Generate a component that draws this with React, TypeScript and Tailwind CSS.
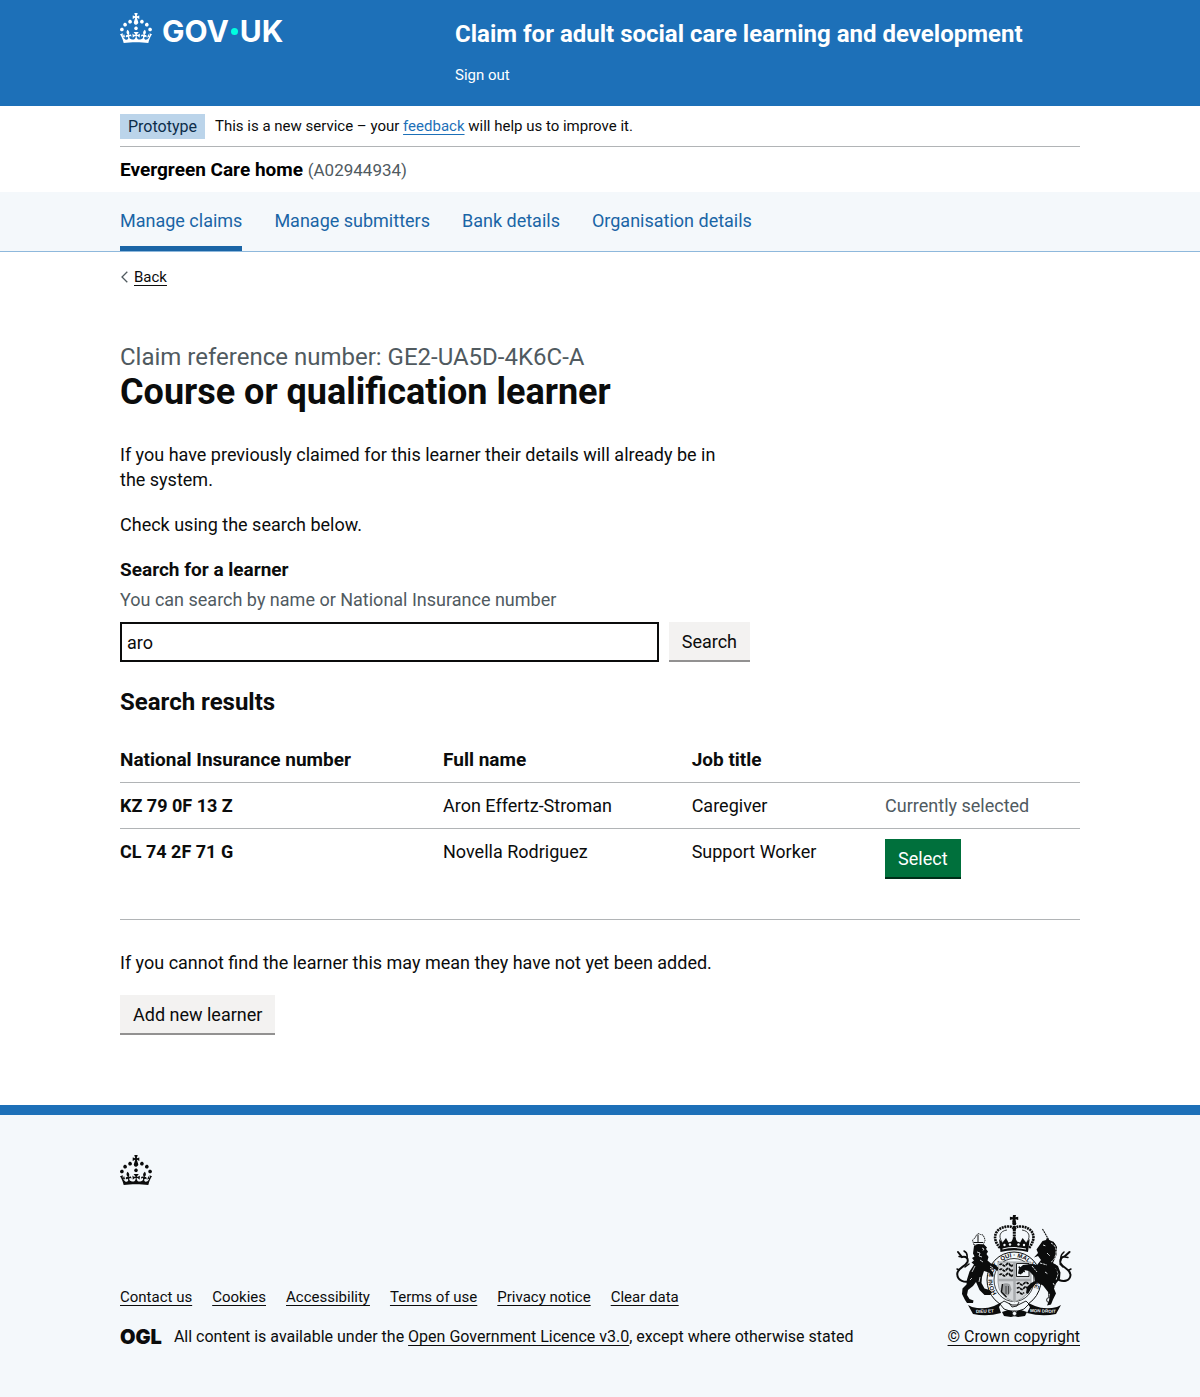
import React, { useState } from "react";

const CROWN =
  "M22.6 10.4c-1 .4-2-.1-2.4-1-.4-.9.1-2 1-2.4.9-.4 2 .1 2.4 1s-.1 2-1 2.4m-5.9 6.7c-.9.4-2-.1-2.4-1-.4-.9.1-2 1-2.4.9-.4 2 .1 2.4 1s-.1 2-1 2.4m10.8-3.7c-1 .4-2-.1-2.4-1-.4-.9.1-2 1-2.4.9-.4 2 .1 2.4 1s0 2-1 2.4m3.3 4.8c-1 .4-2-.1-2.4-1-.4-.9.1-2 1-2.4.9-.4 2 .1 2.4 1s-.1 2-1 2.4M17 4.7l2.3 1.2V2.5l-2.3.7-.2-.2.9-3h-3.4l.9 3-.2.2c-.1.1-2.3-.7-2.3-.7v3.4L15 4.7c.1.1.1.2.2.2l-1.3 4c-.1.2-.1.4-.1.6 0 1.1.8 2 1.9 2.2h.7c1-.2 1.9-1.1 1.9-2.1 0-.2 0-.4-.1-.6l-1.3-4c-.1-.2 0-.2.1-.3m-7.6 5.7c.9.4 2-.1 2.4-1 .4-.9-.1-2-1-2.4-.9-.4-2 .1-2.4 1s0 2 1 2.4m-5 3c.9.4 2-.1 2.4-1 .4-.9-.1-2-1-2.4-.9-.4-2 .1-2.4 1s.1 2 1 2.4m-3.2 4.8c.9.4 2-.1 2.4-1 .4-.9-.1-2-1-2.4-.9-.4-2 .1-2.4 1s0 2 1 2.4m14.8 11c4.4 0 8.6.3 12.3.8 1.1-4.5 2.4-7 3.7-8.8l-2.5-.9c.2 1.3.3 1.9 0 2.7-.4-.4-.8-1.1-1.1-2.3l-1.2 4c.7-.5 1.3-.8 2-.9-1.1 2.5-2.6 3.1-3.5 3-1.1-.2-1.7-1.2-1.5-2.1.3-1.2 1.5-1.5 2.1-.1 1.1-2.3-.8-3-2-2.3 1.9-1.9 2.1-3.5.6-5.6-2.1 1.6-2.1 3.2-1.2 5.5-1.2-1.4-3.2-.6-2.5 1.6.9-1.4 2.1-.5 1.9.8-.2 1.1-1.7 2.1-3.5 1.9-2.7-.2-2.9-2.1-2.9-3.6.7-.1 1.9.5 2.9 1.9l.4-4.3c-1.1 1.1-2.1 1.4-3.2 1.4.4-1.2 2.1-3 2.1-3h-5.4s1.7 1.9 2.1 3c-1.1 0-2.1-.2-3.2-1.4l.4 4.3c1-1.4 2.2-2 2.9-1.9-.1 1.5-.2 3.4-2.9 3.6-1.9.2-3.4-.8-3.5-1.9-.2-1.3 1-2.2 1.9-.8.7-2.3-1.2-3-2.5-1.6.9-2.2.9-3.9-1.2-5.5-1.5 2-1.3 3.7.6 5.6-1.2-.7-3.1 0-2 2.3.6-1.4 1.8-1.1 2.1.1.2.9-.3 1.9-1.5 2.1-.9.2-2.4-.5-3.5-3 .6 0 1.2.3 2 .9l-1.2-4c-.3 1.1-.7 1.9-1.1 2.3-.3-.8-.2-1.4 0-2.7l-2.9.9C1.3 23 2.6 25.5 3.7 30c3.7-.5 7.9-.8 12.3-.8";

const NAV = ["Manage claims", "Manage submitters", "Bank details", "Organisation details"];
const FOOTER_LINKS = ["Contact us", "Cookies", "Accessibility", "Terms of use", "Privacy notice", "Clear data"];

function Container({ children, className = "" }: { children: React.ReactNode; className?: string }) {
  return (
    <div className="px-4 lg:px-8">
      <div className={`mx-auto max-w-[960px] ${className}`}>{children}</div>
    </div>
  );
}

function Crown() {
  return (
    <svg viewBox="0 0 32 30" width="32" height="30" fill="currentColor" aria-hidden="true" className="shrink-0">
      <path d={CROWN} />
    </svg>
  );
}

function Wordmark() {
  return (
    <a href="#" aria-label="GOV.UK" className="flex items-start gap-2.5 text-white">
      <Crown />
      <span className="flex items-center pt-[3px] font-['Inter',sans-serif] text-[30px] leading-[30px] font-bold">
        GOV
        <span className="mx-0.5 size-[7px] rounded-full bg-[#00ffe0]" />
        UK
      </span>
    </a>
  );
}

function CoatOfArms() {
  return (
    <svg viewBox="0 0 116 102" width="116" height="102" fill="#0b0c0c" aria-hidden="true">
      <defs>
        <path id="garter" d="M58 87.500a21.500 22.700 0 1 1 .1 0" />
      </defs>
      {/* crown */}
      <path d="M57 0h3l-.5 2.300 2.700-.6v3.200l-2.700-.6.6 3.200h-4l.6-3.200-2.800.6V1.700l2.800.6z" />
      <circle cx="58.300" cy="8.500" r="2" />
      <g fill="none" stroke="#0b0c0c">
        <path d="M44 33C35 23 39 13 51 11.500q5-.5 7.300 2.500 2.300-3 7.300-2.500C78 13 81 23 73 33" strokeWidth="2.600" strokeDasharray="2 .7" />
        <path d="M46 27c-4-6-2-11 5-12M71 27c4-6 2-11-5-12" strokeWidth=".8" />
        <path d="M58.300 11v14" strokeWidth="3" strokeDasharray="2.200 .6" />
      </g>
      <path d="M43 24l3.500 3.500L50 23l2.500 4.500 3-1 2.800-5.500 2.800 5.500 3 1 2.500-4.500 3.500 4.500 3.600-3.500L72 37q-14-3.500-27.500 0z" />
      <g fill="#f4f8fb">
        <circle cx="48.500" cy="30" r="1.200" />
        <circle cx="54" cy="29.500" r="1.200" />
        <circle cx="62.500" cy="29.500" r="1.200" />
        <circle cx="68" cy="30" r="1.200" />
        <path d="M46.500 33.500q12-2.800 23.500 0v1q-12-2.800-23.500 0z" />
      </g>
      {/* garter */}
      <ellipse cx="58" cy="65" rx="27" ry="28" fill="#f4f8fb" stroke="#0b0c0c" strokeWidth="1" />
      <ellipse cx="58" cy="65" rx="20" ry="21.500" fill="none" stroke="#0b0c0c" strokeWidth=".8" />
      <text fontFamily="Liberation Sans, sans-serif" fontWeight="700" fontSize="6">
        <textPath href="#garter" startOffset="20">
          HONI SOIT · QUI · MAL Y PENSE
        </textPath>
      </text>
      {/* shield */}
      <path d="M42 47h33v20q0 14-16.500 20Q42 81 42 67z" fill="#d3d6d8" stroke="#8d9092" strokeWidth=".8" />
      <path d="M42 65h33M58.500 47v40" stroke="#a9acae" strokeWidth="2.500" />
      <path d="M60.500 48.500H73v13H60.500z" fill="#f4f8fb" stroke="#0b0c0c" strokeWidth=".9" />
      <path d="M63 51l1.800 1.400 2-1.200 1.400 1-.6 1.400 2-1 .6 1.400-1.600 1.200.6 2.400-1.600-.8-1.400 1.800-.8-1.400-1.600 1.400.4-2.400-1.300-.8 1-1.300-1.500-1.300z" />
      <g fill="none" stroke="#0b0c0c" strokeWidth="1.700">
        <path d="M43.500 50q2-2 3.500 0t3.500-.5 3.500.5 2.500-.5M43.500 55q2-2 3.500 0t3.500-.5 3.500.5 2.500-.5M43.500 60q2-2 3.500 0t3.500-.5 3.500.5 2.500-.5" strokeDasharray="3 .6" />
        <path d="M61 69q2-2 3.500 0t3.500-.5 4.500.5M61 73.500q2-2 3.500 0t3.500-.5 3.500.5M61 78q2-2 3.500 0t3.500-.5" strokeDasharray="3 .6" />
      </g>
      <path d="M46 69.500q4-2.500 8 0l1.500 5-3 6q-5-.5-8-6.500z" fill="#9a9d9f" />
      <path d="M46.500 69l-1 8 5 5" fill="none" stroke="#0b0c0c" strokeWidth="1.300" />
      <path d="M50 71v8M52.500 71v8" stroke="#0b0c0c" strokeWidth=".6" />
      {/* lion */}
      <path d="M18 30l-1.500-5 2.500-2 1.500-3 2-1.500 2 1 2.500.5 1.500 3 .5 2.500-2 4.500z" fill="#f4f8fb" stroke="#0b0c0c" strokeWidth=".9" strokeDasharray="1.600 .6" />
      <path d="M22 19.500v8M18 27.500h9" stroke="#0b0c0c" strokeWidth="1" />
      <path d="M18 31l4-2 6 .5 3 3-1 1.500 2 2.500-1.500 2.500 2 3-1 3.500 3.500 3 4.500 1.500 3 3-1 3-3-2-5-1 3.500 4.500.5 4-2-.5-2.500-3.500-5-1.500-2 6-.5 6 3 5.500 5 1.500 2.500 2-1.500 3h-6l-5-5-3.500-8-3 4-5 4-1 5 2.500 4 4 1.500-.5 2.500h-6l-2-3-3-6 .5-5.500 4-4 .5-5 2.500-8 4.500-7-2.500-2 2.500-2-2-2.500 2.500-1.500-1.500-3z" />
      <path d="M26 33l2 1-1 1.500M21 37l3 1-1 3 3 1M24 45l3 2M19 51l-3 6M16 63l-3 3M24 62l-1 5M34 51l3 2" fill="none" stroke="#f4f8fb" strokeWidth=".8" />
      <g fill="none" stroke="#0b0c0c" strokeLinecap="round">
        <path d="M14 66C9 68 1.500 66 1.200 59c0-6 8-7 10.300-12C12.500 43 10 41 6 42L2 37" strokeWidth="2" />
        <path d="M11 43q1-5-3-7M6 42l-3-.5M9 52l4-3M3 55l-2-1" strokeWidth="1.500" />
      </g>
      {/* unicorn */}
      <path d="M86.500 14l7 12" stroke="#0b0c0c" strokeWidth="1.100" strokeDasharray="2 .6" />
      <path d="M82 38l-1.500-3.500 6-8.500 3.500-1 1-2.500 2 2.500 5 2 3 5-.5 8-3.500 8 5 3 2.500 6.500-.5 6-4 5-2 5 2 5-3 6-2 5-4 1 2-5 1-6-3.500-4.500-3.500-4.500-6-3-6 6.500-3 5-2-1 1-6 4-4 4-2-1-5-5-5-5-1-3 4.500-3-1 1-5 4-3.500 8-1 6 1 4-5-3-4-4 1.500z" />
      <path d="M95 28q6 3 5 10t-5 9M98 27q6 4 5 12M87 30l3 1M91 38l3 3M84 48l7 2M76 51l5 6M100 53l2 6-2 6M82 71l-3 4M97 68l3 5M89 57l3 2" fill="none" stroke="#f4f8fb" strokeWidth=".9" strokeDasharray="2.500 .8" />
      <g fill="none" stroke="#0b0c0c" strokeLinecap="round">
        <path d="M103 65c5 2 11 1 11.500-5 .3-6-8-7-10-12-1-4 1.500-6 4-6.500l5-4.500" strokeWidth="2" />
        <path d="M105 45q-1-5 3-8M109 42l3 .5M107 52l-3-3M113 55l2-1" strokeWidth="1.500" />
        <path d="M99 50q5 10-3 18-4 5-3 14" strokeWidth="1.200" strokeDasharray="1.500 1" />
        <circle cx="93" cy="85" r="2.400" strokeWidth=".9" />
      </g>
      {/* motto scroll */}
      <path d="M12 90l4 2q12 3 22-1l8-4-3 5 2 6q-14 4-28 1z" />
      <path d="M105 90l-4 2q-12 3-22-1l-9-4 4 5-3 6q15 4 29 1z" />
      <g fill="#f4f8fb" fontFamily="Liberation Sans, sans-serif" fontWeight="700" fontSize="4.500">
        <text x="20" y="98" transform="rotate(-2 20 98)">DIEU ET</text>
        <text x="74" y="97" transform="rotate(2 74 97)">MON DROIT</text>
      </g>
      {/* buckle and roses */}
      <path d="M48 86l8 4 6 0 8-4 3 3-5 5-6 2h-8l-6-2-4-5z" fill="#f4f8fb" stroke="#0b0c0c" strokeWidth=".9" />
      <path d="M53 88l3 4 5-1 2-4" fill="none" stroke="#0b0c0c" strokeWidth=".9" />
      <path d="M46 97l6-2 4 1 3 5-4 1-7-1zM71 97l-6-2-4 1-3 5 4 1 7-1z" />
      <circle cx="58.500" cy="98.500" r="2.200" fill="#f4f8fb" stroke="#0b0c0c" strokeWidth=".8" />
    </svg>
  );
}

const textLink = "underline decoration-1 underline-offset-[3px]";
const greyButton =
  "h-[40px] shrink-0 cursor-pointer border-b-2 border-[#929191] bg-[#f3f2f1] px-[13px] text-[18px] leading-[25px]";

export default function App() {
  const [query, setQuery] = useState("aro");
  return (
    <div className="bg-white font-['Roboto','Liberation_Sans',sans-serif] text-[18px] leading-[25px] text-[#0b0c0c]">
      <header className="bg-[#1d70b8] text-white">
        <Container className="flex flex-wrap pb-5">
          <div className="w-[335px] pt-[13px]">
            <Wordmark />
          </div>
          <div className="pt-[19px]">
            <a href="#" className="block text-[24px] leading-[30px] font-bold">
              Claim for adult social care learning and development
            </a>
            <a href="#" className="mt-4 inline-block text-[15px] leading-5">
              Sign out
            </a>
          </div>
        </Container>
      </header>

      <Container>
        <div className="flex items-center gap-2.5 border-b border-[#b1b4b6] pt-2 pb-[7px] text-[15px]">
          <strong className="bg-[#bbd4ea] px-2 text-[16px] font-normal text-[#0c2d4a]">Prototype</strong>
          <span>
            This is a new service – your{" "}
            <a href="#" className={`text-[#1d70b8] ${textLink}`}>
              feedback
            </a>{" "}
            will help us to improve it.
          </span>
        </div>
        <p className="pt-2.5 pb-[9px] text-[19px] font-bold text-black">
          Evergreen Care home <span className="text-[17px] font-normal text-[#505a5f]">(A02944934)</span>
        </p>
      </Container>

      <nav aria-label="Service" className="border-b border-[#8eb8dc] bg-[#f4f8fb]">
        <Container>
          <ul className="flex flex-wrap gap-x-8">
            {NAV.map((label, i) => (
              <li key={label}>
                <a
                  href="#"
                  aria-current={i === 0 ? "page" : undefined}
                  className={`block border-b-[5px] pt-4 pb-[13px] text-[#1a65a6] ${
                    i === 0 ? "border-[#1a65a6]" : "border-transparent"
                  }`}
                >
                  {label}
                </a>
              </li>
            ))}
          </ul>
        </Container>
      </nav>

      <Container>
        <a href="#" className="mt-[15px] inline-flex items-center gap-1.5 text-[15px] leading-5">
          <svg viewBox="0 0 8 12" width="8" height="12" fill="none" stroke="#505a5f" strokeWidth="1.300" aria-hidden="true">
            <path d="M7.300 .8 2 6l5.300 5.200" />
          </svg>
          <span className={textLink}>Back</span>
        </a>

        <main className="pt-[53px] pb-[70px]">
          <div className="max-w-[630px]">
            <span className="block text-[24px] leading-[30px] text-[#505a5f]">
              Claim reference number: GE2-UA5D-4K6C-A
            </span>
            <h1 className="mb-[30px] text-[36px] leading-[40px] font-bold">Course or qualification learner</h1>
            <p className="mb-5 pr-4">
              If you have previously claimed for this learner their details will already be in the system.
            </p>
            <p className="mb-5">Check using the search below.</p>
            <form onSubmit={(e) => e.preventDefault()}>
              <label htmlFor="search" className="mb-[5px] block text-[19px] font-bold">
                Search for a learner
              </label>
              <p id="search-hint" className="mb-2.5 text-[#505a5f]">
                You can search by name or National Insurance number
              </p>
              <div className="flex gap-2.5">
                <input
                  id="search"
                  type="text"
                  aria-describedby="search-hint"
                  value={query}
                  onChange={(e) => setQuery(e.target.value)}
                  className="h-[40px] min-w-0 flex-1 border-2 border-[#0b0c0c] p-[5px]"
                />
                <button type="submit" className={greyButton}>
                  Search
                </button>
              </div>
            </form>
          </div>

          <h2 className="mt-[25px] mb-5 text-[24px] leading-[30px] font-bold">Search results</h2>
          <table className="w-full table-fixed border-collapse text-left">
            <thead>
              <tr className="border-b border-[#b1b4b6] text-[19px]">
                <th scope="col" className="w-[33.65%] py-2.5 pr-5 font-bold">National Insurance number</th>
                <th scope="col" className="w-[25.9%] py-2.5 pr-5 font-bold">Full name</th>
                <th scope="col" className="w-[20.15%] py-2.5 pr-5 font-bold">Job title</th>
                <td className="py-2.5" />
              </tr>
            </thead>
            <tbody className="align-top">
              <tr className="border-b border-[#b1b4b6]">
                <th scope="row" className="py-2.5 pr-5 font-bold">KZ 79 0F 13 Z</th>
                <td className="py-2.5 pr-5">Aron Effertz-Stroman</td>
                <td className="py-2.5 pr-5">Caregiver</td>
                <td className="py-2.5 text-[#505a5f]">Currently selected</td>
              </tr>
              <tr className="border-b border-[#b1b4b6]">
                <th scope="row" className="py-2.5 pr-5 font-bold">CL 74 2F 71 G</th>
                <td className="py-2.5 pr-5">Novella Rodriguez</td>
                <td className="py-2.5 pr-5">Support Worker</td>
                <td className="py-2.5">
                  <button
                    type="button"
                    className="mb-[30px] block h-[40px] cursor-pointer border-b-2 border-[#002d18] bg-[#00703c] px-[13px] text-white"
                  >
                    Select
                  </button>
                </td>
              </tr>
            </tbody>
          </table>

          <p className="mt-[30px] mb-5">If you cannot find the learner this may mean they have not yet been added.</p>
          <button type="button" className={`block ${greyButton}`}>
            Add new learner
          </button>
        </main>
      </Container>

      <footer className="border-t-[10px] border-[#1d70b8] bg-[#f4f8fb] pt-10 pb-[50px] text-[16px] leading-5">
        <Container>
          <Crown />
          <div className="mt-[30px] flex flex-wrap items-end justify-between gap-5">
            <div>
              <ul className="mb-5 flex flex-wrap gap-x-5 text-[15px]">
                {FOOTER_LINKS.map((label) => (
                  <li key={label}>
                    <a href="#" className={textLink}>
                      {label}
                    </a>
                  </li>
                ))}
              </ul>
              <div className="flex items-center gap-3">
                <span className="font-['Inter',sans-serif] text-[20px] leading-5 font-black">OGL</span>
                <span>
                  All content is available under the{" "}
                  <a href="#" className={textLink}>
                    Open Government Licence v3.0
                  </a>
                  , except where otherwise stated
                </span>
              </div>
            </div>
            <a href="#" className={`flex flex-col items-center gap-2.5 ${textLink}`}>
              <CoatOfArms />
              <span>© Crown copyright</span>
            </a>
          </div>
        </Container>
      </footer>
    </div>
  );
}
